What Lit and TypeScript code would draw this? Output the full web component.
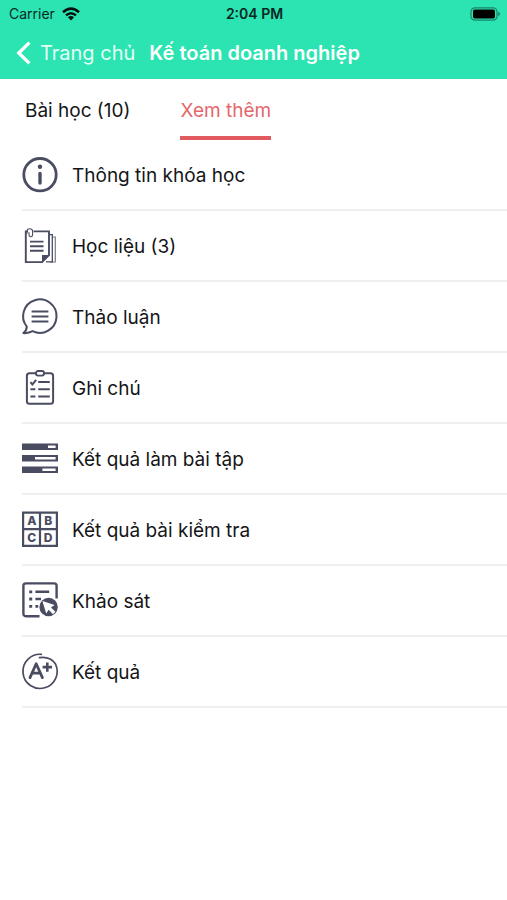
import { LitElement, html, css, svg, type SVGTemplateResult } from "lit";
import { customElement, state } from "lit/decorators.js";
import { classMap } from "lit/directives/class-map.js";

interface Entry {
  label: string;
  icon: SVGTemplateResult;
}

const entries: Entry[] = [
  {
    label: "Thông tin khóa học",
    icon: svg`
      <circle cx="18" cy="17.7" r="16.2" stroke-width="2.8" />
      <circle class="solid" cx="18" cy="9.8" r="2.2" />
      <path stroke-width="3.4" stroke-linecap="round" d="M18 16.5V26" />`,
  },
  {
    label: "Học liệu (3)",
    icon: svg`
      <path stroke-width="1.9" d="M11.5 3.4H27V27L20 34.1H3.8V3.4H6" />
      <path class="solid" d="M20 27H27.6L20 34.8Z" />
      <path stroke-width="1.3" d="M28 6.6H30.3V33.8H24" />
      <path stroke-width="1.2" opacity=".75" d="M30.5 9H33.3V34H28" />
      <path stroke-width="1.1" stroke-linecap="round" d="M5 5.2V3.2Q5 .7 7.6 .7Q10.6 .7 10.6 3.2V6.8Q10.6 8.8 8.8 8.8Q7 8.8 7 6.8V4.6" />
      <path stroke-width="1.9" d="M8 13.6H21.5M8 18.2H21.5M8 22.8H21.5" />`,
  },
  {
    label: "Thảo luận",
    icon: svg`
      <path stroke-width="2" stroke-linejoin="round" d="M4.8 27.6A16.7 16.7 0 1 1 10.6 32.2Q6.8 34.4 1.4 34.1Q4.6 31.6 4.8 27.6Z" />
      <path stroke-width="2" d="M9.6 12.4H26.4M9.6 17.4H26.4M9.6 22.4H26.4" />`,
  },
  {
    label: "Ghi chú",
    icon: svg`
      <path stroke-width="2" d="M14 3.2H7.5Q4.9 3.2 4.9 5.8V31.2Q4.9 33.8 7.5 33.8H28.5Q31.1 33.8 31.1 31.2V5.8Q31.1 3.2 28.5 3.2H22" />
      <rect x="14" y="1" width="8" height="4.6" rx="2" stroke-width="1.9" />
      <path stroke-width="2" d="M8.4 12.2L10.4 14.4L14.2 9.8M16.2 12.1H27.8M16.2 19.3H27.8M16.2 26.4H27.8M8.4 19.3H13.4M8.4 26.4H13.4" />`,
  },
  {
    label: "Kết quả làm bài tập",
    icon: svg`
      <path class="solid" fill-rule="evenodd" d="M0 2.5H36V9H0ZM26 4.4V7.1H33.6V4.4Z" />
      <path class="solid" fill-rule="evenodd" d="M0 14H36V20.5H0ZM13 15.9V18.6H33.6V15.9Z" />
      <path class="solid" fill-rule="evenodd" d="M0 25.5H36V32H0ZM20.4 27.4V30.1H33.6V27.4Z" />`,
  },
  {
    label: "Kết quả bài kiểm tra",
    icon: svg`
      <path stroke-width="2.2" d="M1.1 .6H34.9V33.9H1.1ZM18 .6V33.9M1.1 17.2H34.9" />
      <g class="letters">
        <text x="9.8" y="13.4">A</text>
        <text x="26.2" y="13.4">B</text>
        <text x="9.8" y="29.6">C</text>
        <text x="26.2" y="29.6">D</text>
      </g>`,
  },
  {
    label: "Khảo sát",
    icon: svg`
      <path stroke-width="2.4" d="M17.5 33.2H4Q1.4 33.2 1.4 30.6V2.8Q1.4 .4 4 .4H32Q34.6 .4 34.6 2.8V15.5" />
      <path stroke-width="2.8" d="M7.2 8.8H10.2M7.2 16H10.2M7.2 23.4H10.2M13.4 23.4H16.2" />
      <path stroke-width="2.5" d="M13.4 8.8H27.2M13.4 16H19" />
      <circle class="solid" cx="26.6" cy="24" r="9.2" />
      <path class="paper" d="M20.4 18L32.6 22L29 24.4L33.4 28.8L31 31.2L26.6 26.8L24.2 30.4Z" />`,
  },
  {
    label: "Kết quả",
    icon: svg`
      <path stroke-width="1.7" stroke-linecap="round" d="M19.4 .3A17.1 17.1 0 1 0 33.4 9.8Q28.6 2.2 17.4 3.6" />
      <path stroke-width="2.8" stroke-linejoin="round" stroke-linecap="round" d="M8 23.6L14.2 9.8L20.4 23.6M10.4 19.2H18" />
      <path stroke-width="2.6" d="M25.3 8.4V17.8M20.6 13.1H30" />`,
  },
];

@customElement("app-root")
export class AppRoot extends LitElement {
  static styles = css`
    :host {
      display: block;
      min-height: 100vh;
      background: #fff;
      color: #151517;
      font-family: Inter, "Noto Sans", sans-serif;
    }
    button {
      border: 0;
      padding: 0;
      background: none;
      font: inherit;
      color: inherit;
      cursor: pointer;
    }
    .top {
      background: #2ce3b2;
    }
    .status {
      display: grid;
      grid-template-columns: 1fr auto 1fr;
      align-items: center;
      height: 27px;
      padding: 0 7px 0 9px;
      font-size: 14px;
      color: #08281f;
    }
    .carrier {
      display: flex;
      align-items: center;
      gap: 7px;
    }
    .clock {
      font-weight: 600;
    }
    .battery {
      justify-self: end;
    }
    .nav {
      display: flex;
      align-items: center;
      gap: 14px;
      height: 52px;
      padding-left: 16px;
      font-size: 20px;
      color: #fff;
    }
    .back {
      display: flex;
      align-items: center;
      gap: 9px;
      color: #e3fff6;
    }
    .title {
      margin: 0;
      font-size: 20px;
      font-weight: 600;
    }
    .tabs {
      display: flex;
      gap: 50px;
      padding-left: 25px;
      height: 61px;
      font-size: 19px;
    }
    .tab {
      box-sizing: border-box;
      padding-top: 2px;
      border-top: 4px solid transparent;
      border-bottom: 4px solid transparent;
    }
    .tab.current {
      color: #e4676c;
      border-bottom-color: #e05a60;
    }
    .list {
      list-style: none;
      margin: 0;
      padding: 0 0 0 22px;
    }
    .item {
      border-bottom: 2px solid #efeff0;
    }
    .row {
      display: flex;
      align-items: center;
      gap: 14px;
      width: 100%;
      height: 69px;
      font-size: 19px;
      text-align: left;
    }
    .label {
      padding-top: 2px;
    }
    .icon {
      flex: none;
      overflow: visible;
      fill: none;
      stroke: #4a4c62;
    }
    .solid {
      fill: #4a4c62;
      stroke: none;
    }
    .paper {
      fill: #fff;
      stroke: none;
    }
    .letters {
      fill: #4a4c62;
      stroke: none;
      font-size: 12px;
      font-weight: 800;
      text-anchor: middle;
    }
  `;

  @state() private current = 1;

  private tabs = ["Bài học (10)", "Xem thêm"];

  render() {
    return html`
      <header class="top">
        <div class="status">
          <span class="carrier">
            Carrier
            <svg width="18" height="14" viewBox="0 0 18 14" fill="none" stroke="#04120e" stroke-width="2.5" aria-hidden="true">
              <path d="M1 5.2Q9 -2 17 5.2M4 8.4Q9 4 14 8.4" />
              <path d="M9 13.4L5.9 10.3Q9 7.9 12.1 10.3Z" fill="#04120e" stroke="none" />
            </svg>
          </span>
          <span class="clock">2:04 PM</span>
          <svg class="battery" width="30" height="14" viewBox="0 0 30 14" aria-hidden="true">
            <rect x="1" y=".8" width="26" height="12.4" rx="4" fill="none" stroke="#1a8468" stroke-width="1.2" />
            <rect x="3" y="2.6" width="22" height="8.8" rx="2" fill="#000" />
            <path d="M28.2 4.8Q30 5.6 30 7Q30 8.4 28.2 9.2Z" fill="#1a8468" />
          </svg>
        </div>
        <nav class="nav">
          <button class="back">
            <svg width="15" height="24" viewBox="0 0 15 24" fill="none" stroke="#fff" stroke-width="3.4" aria-hidden="true">
              <path d="M13.4 1.6L2.8 12L13.4 22.4" />
            </svg>
            Trang chủ
          </button>
          <h1 class="title">Kế toán doanh nghiệp</h1>
        </nav>
      </header>
      <div class="tabs" role="tablist">
        ${this.tabs.map(
          (label, i) => html`<button
            role="tab"
            aria-selected=${i === this.current ? "true" : "false"}
            class=${classMap({ tab: true, current: i === this.current })}
            @click=${() => (this.current = i)}
          >${label}</button>`
        )}
      </div>
      <ul class="list">
        ${entries.map(
          (e) => html`<li class="item">
            <button class="row">
              <svg class="icon" width="36" height="36" viewBox="0 0 36 36" aria-hidden="true">${e.icon}</svg>
              <span class="label">${e.label}</span>
            </button>
          </li>`
        )}
      </ul>
    `;
  }
}
